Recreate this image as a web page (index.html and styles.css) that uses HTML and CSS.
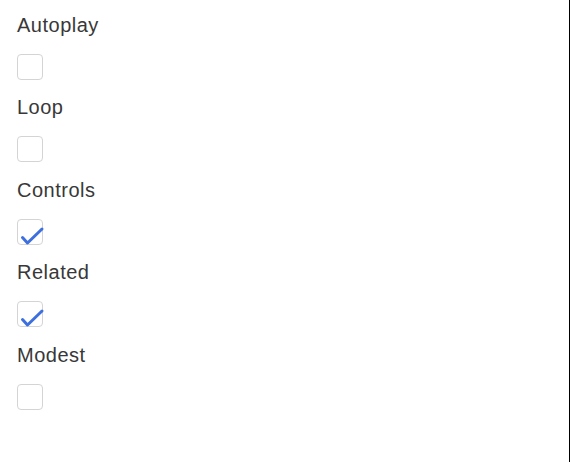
FILE: index.html
```html
<!DOCTYPE html>
<html>
<head>
<meta charset="utf-8">
<link rel="stylesheet" href="styles.css">
</head>
<body>
<div class="panel">
  <div class="field">
    <div class="label">Autoplay</div>
    <span class="box"></span>
  </div>
  <div class="field">
    <div class="label">Loop</div>
    <span class="box"></span>
  </div>
  <div class="field">
    <div class="label">Controls</div>
    <span class="box checked"><svg class="tick" width="30" height="30" viewBox="0 0 30 30"><path d="M5.5 18.5 L10.5 24 L25 10" fill="none" stroke="#3d6fde" stroke-width="3" stroke-linecap="round" stroke-linejoin="round"/></svg></span>
  </div>
  <div class="field">
    <div class="label">Related</div>
    <span class="box checked"><svg class="tick" width="30" height="30" viewBox="0 0 30 30"><path d="M5.5 18.5 L10.5 24 L25 10" fill="none" stroke="#3d6fde" stroke-width="3" stroke-linecap="round" stroke-linejoin="round"/></svg></span>
  </div>
  <div class="field">
    <div class="label">Modest</div>
    <span class="box"></span>
  </div>
</div>
</body>
</html>
```
FILE: styles.css
```css
html, body {
  margin: 0;
  padding: 0;
  background: #fff;
}
.panel {
  width: 570px;
  height: 462px;
  border-right: 1px solid #000;
  padding: 13.5px 0 0 17px;
  box-sizing: border-box;
  font-family: "Liberation Sans", Arial, sans-serif;
  color: #383838;
}
.field {
  display: flex;
  flex-direction: column;
  align-items: flex-start;
  margin-bottom: 16.5px;
}
.label {
  font-size: 20px;
  line-height: 23px;
  letter-spacing: 0.5px;
  margin-bottom: 17px;
}
.box {
  position: relative;
  display: block;
  width: 26px;
  height: 26px;
  box-sizing: border-box;
  border: 1px solid #d4d4d4;
  border-radius: 4px;
  background: #fff;
}
.tick {
  position: absolute;
  left: -1px;
  top: -1px;
}
```
